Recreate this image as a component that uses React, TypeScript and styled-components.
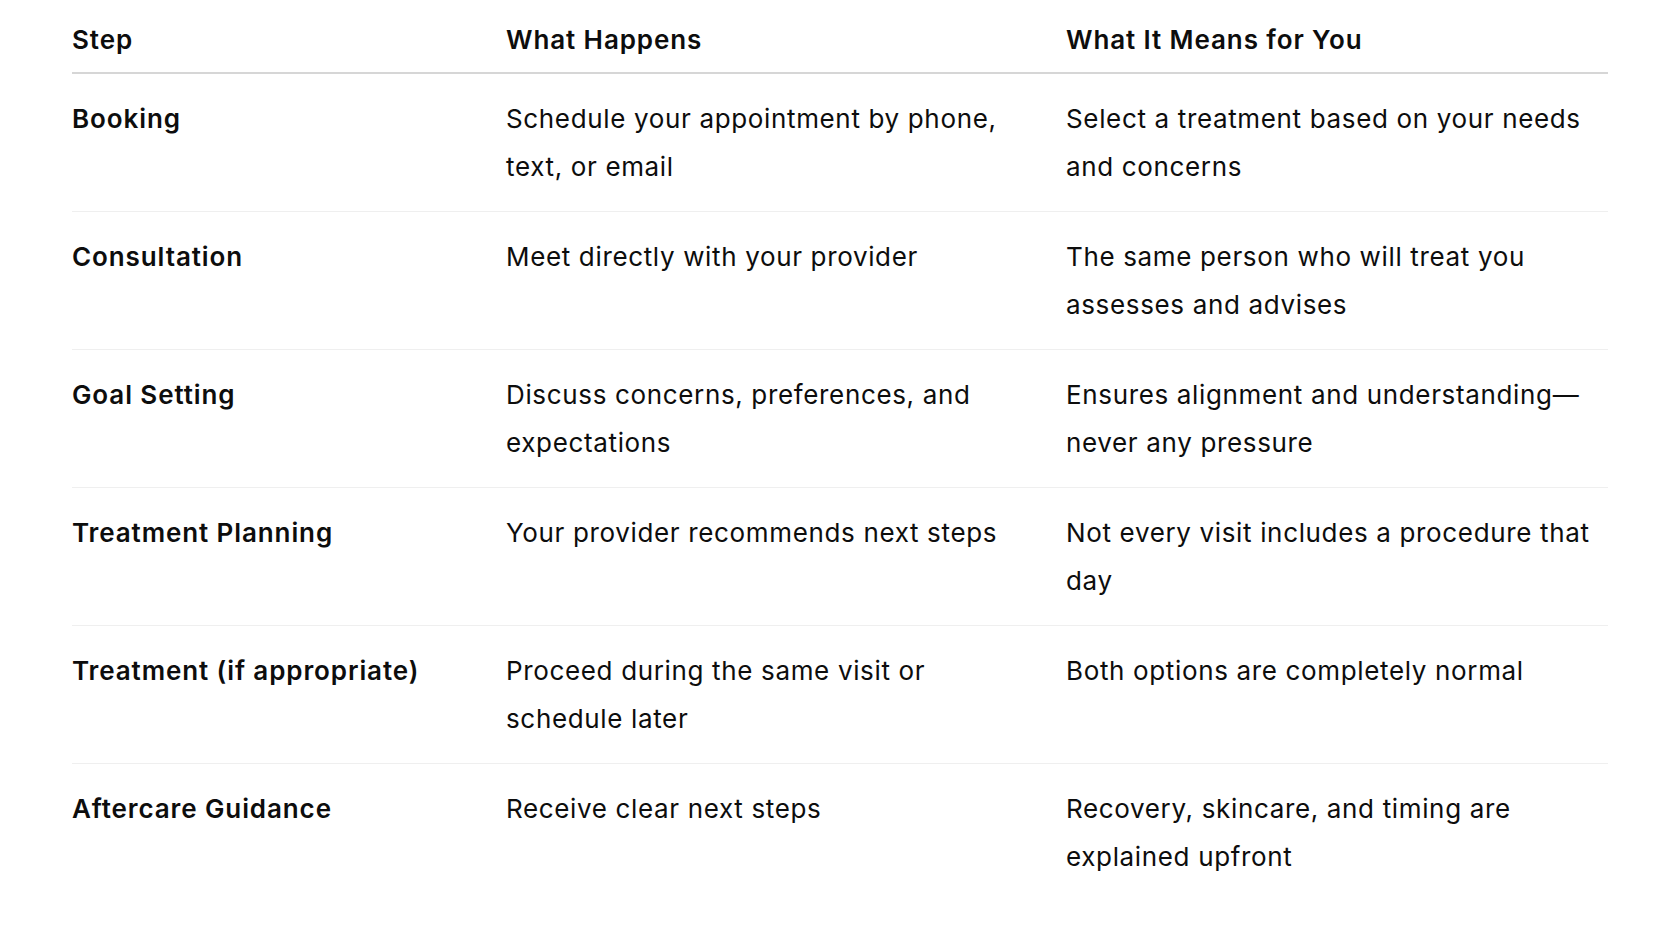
import * as React from 'react';
import styled, { createGlobalStyle } from 'styled-components';

const GlobalStyle = createGlobalStyle`
  html, body {
    margin: 0;
    padding: 0;
    background: #ffffff;
  }
  body {
    font-family: Inter, "Noto Sans", "Liberation Sans", sans-serif;
    color: #0d0d0d;
    -webkit-font-smoothing: antialiased;
  }
`;

const Page = styled.div`
  padding: 16px 72px 0 72px;
  width: 1680px;
  box-sizing: border-box;
`;

const Table = styled.div`
  width: 1536px;
`;

const Row = styled.div<{ $head?: boolean; $last?: boolean }>`
  display: grid;
  grid-template-columns: 434px 560px 1fr;
  border-bottom: ${(p) =>
    p.$last ? 'none' : p.$head ? '2px solid #d6d6d6' : '1.5px solid #efefef'};
  padding: ${(p) => (p.$head ? '0 0 8px 0' : '21px 0 20px 0')};
`;

const Cell = styled.div<{ $bold?: boolean }>`
  font-size: 26px;
  line-height: 48px;
  font-weight: ${(p) => (p.$bold ? 600 : 400)};
  letter-spacing: ${(p) => (p.$bold ? '0.9px' : '0.65px')};
  padding-right: 40px;

  &:last-child {
    padding-right: 0;
  }
`;

const rows = [
  ['Booking', 'Schedule your appointment by phone, text, or email', 'Select a treatment based on your needs and concerns'],
  ['Consultation', 'Meet directly with your provider', 'The same person who will treat you assesses and advises'],
  ['Goal Setting', 'Discuss concerns, preferences, and expectations', 'Ensures alignment and understanding\u2014never any pressure'],
  ['Treatment Planning', 'Your provider recommends next steps', 'Not every visit includes a procedure that day'],
  ['Treatment (if appropriate)', 'Proceed during the same visit or schedule later', 'Both options are completely normal'],
  ['Aftercare Guidance', 'Receive clear next steps', 'Recovery, skincare, and timing are explained upfront'],
];

export default function App() {
  return (
    <>
      <GlobalStyle />
      <Page>
        <Table>
          <Row $head>
            <Cell $bold>Step</Cell>
            <Cell $bold>What Happens</Cell>
            <Cell $bold>What It Means for You</Cell>
          </Row>
          {rows.map((r, i) => (
            <Row key={r[0]} $last={i === rows.length - 1}>
              <Cell $bold>{r[0]}</Cell>
              <Cell>{r[1]}</Cell>
              <Cell>{r[2]}</Cell>
            </Row>
          ))}
        </Table>
      </Page>
    </>
  );
}
